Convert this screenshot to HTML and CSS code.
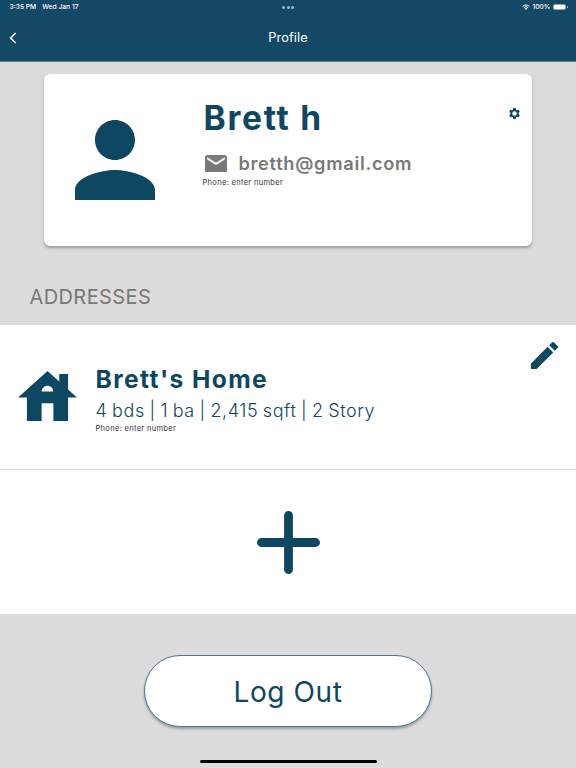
FILE: index.html
```
<!DOCTYPE html>
<html lang="en">

<head>
    <meta charset="UTF-8">
    <title>Profile</title>
    <link rel="stylesheet" href="styles.css">
</head>
<body>
    <header class="header">
        <div class="status-bar">
            <div class="status-left"><span>3:35 PM</span><span>Wed Jan 17</span></div>
            <div class="dots"><i></i><i></i><i></i></div>
            <div class="status-right">
                <svg class="wifi" viewBox="0 0 24 18"><path d="M2 7a14.500 14.500 0 0 1 20 0M5.500 11a9.500 9.500 0 0 1 13 0" fill="none" stroke="#fff" stroke-width="3"/><path d="M8 13.500a6 6 0 0 1 8 0L12 18z" fill="#fff"/></svg>
                <span class="percent">100%</span>
                <div class="battery"></div>
                <div class="battery-tip"></div>
            </div>
        </div>
        <nav class="nav">
            <svg class="back" viewBox="0 0 8 12"><path d="M6.600 1L1.600 6l5 5" fill="none" stroke="#fff" stroke-width="1.500"/></svg>
            <span class="title">Profile</span>
        </nav>
    </header>

    <section class="card">
        <svg class="avatar" viewBox="4 4 16 16"><path d="M12 12c2.210 0 4-1.790 4-4s-1.790-4-4-4-4 1.790-4 4 1.790 4 4 4zm0 2c-2.670 0-8 1.340-8 4v2h16v-2c0-2.660-5.330-4-8-4z"/></svg>
        <div class="user">
            <h1>Brett h</h1>
            <div class="email">
                <svg class="mail" viewBox="2 4 20 16"><path d="M20 4H4c-1.100 0-1.990.9-1.990 2L2 18c0 1.100.9 2 2 2h16c1.100 0 2-.9 2-2V6c0-1.100-.9-2-2-2zm0 4l-8 5-8-5V6l8 5 8-5v2z"/></svg>
                <span>bretth@gmail.com</span>
            </div>
            <p class="phone">Phone: enter number</p>
        </div>
        <svg class="gear" viewBox="0 0 24 24"><path d="M19.430 12.980c.04-.32.07-.64.07-.98s-.03-.66-.07-.98l2.110-1.650c.19-.15.24-.42.12-.64l-2-3.460c-.12-.22-.39-.3-.61-.22l-2.490 1c-.52-.4-1.080-.73-1.690-.98l-.38-2.650C14.460 2.180 14.250 2 14 2h-4c-.25 0-.46.18-.49.42l-.38 2.650c-.61.25-1.170.59-1.690.98l-2.490-1c-.23-.09-.49 0-.61.22l-2 3.460c-.13.22-.07.49.12.64l2.110 1.650c-.04.32-.07.65-.07.98s.03.66.07.98l-2.110 1.650c-.19.15-.24.42-.12.64l2 3.460c.12.22.39.3.61.22l2.490-1c.52.4 1.080.73 1.690.98l.38 2.650c.03.24.24.42.49.42h4c.25 0 .46-.18.49-.42l.38-2.650c.61-.25 1.170-.59 1.690-.98l2.490 1c.23.09.49 0 .61-.22l2-3.460c.12-.22.07-.49-.12-.64l-2.110-1.650zM12 16.200a4.200 4.200 0 1 1 0-8.400 4.200 4.200 0 0 1 0 8.400z"/></svg>
    </section>

    <h2 class="section-title">ADDRESSES</h2>

    <section class="address">
        <svg class="house" viewBox="2 3 20 17"><path d="M19 9.300V4h-3v2.600L12 3 2 12h3v8h5v-6h4v6h5v-8h3l-3-2.700zm-9 .7c0-1.100.9-2 2-2s2 .9 2 2h-4z"/></svg>
        <div class="address-info">
            <h3>Brett's Home</h3>
            <p class="details">4 bds | 1 ba | 2,415 sqft | 2 Story</p>
            <p class="phone">Phone: enter number</p>
        </div>
        <svg class="pencil" viewBox="3 3 18 18"><path d="M3 17.250V21h3.750L17.810 9.940l-3.750-3.750L3 17.250zM20.710 7.040c.39-.39.39-1.020 0-1.410l-2.340-2.340c-.39-.39-1.020-.39-1.410 0l-1.830 1.830 3.750 3.750 1.830-1.830z"/></svg>
    </section>

    <section class="add">
        <svg class="plus" viewBox="0 0 63 63"><path d="M31.500 4.400v54.200M4.400 31.500h54.200" stroke="#0d4761" stroke-width="8.800" stroke-linecap="round"/></svg>
    </section>

    <button class="logout">Log Out</button>
    <div class="home-bar"></div>
</body>
</html>
```
FILE: styles.css
```
* {
    box-sizing: border-box;
}
body {
    font-family: Inter, sans-serif;
    background-color: #dcdcdc;
    color: #0d4761;
    margin: 0;
    height: 768px;
    overflow: hidden;
    display: flex;
    flex-direction: column;
}
h1, h2, h3, p {
    margin: 0;
}
svg {
    display: block;
    fill: #0d4761;
    flex-shrink: 0;
}
.header {
    height: 62px;
    background-color: #144966;
    border-bottom: 1px solid #5c8196;
    color: #fff;
}
.status-bar {
    height: 14px;
    display: grid;
    grid-template-columns: 1fr auto 1fr;
    align-items: center;
    padding: 0 9px 0 9.500px;
    font-size: 6.700px;
    font-weight: 500;
}
.status-left {
    display: flex;
    gap: 6px;
}
.dots {
    display: flex;
    gap: 1.500px;
}
.dots i {
    width: 3px;
    height: 3px;
    border-radius: 50%;
    background-color: #8fbcdc;
}
.status-right {
    display: flex;
    justify-content: flex-end;
    align-items: center;
}
.wifi {
    width: 8px;
    height: 6px;
    margin-right: 2px;
}
.percent {
    margin-right: 2px;
}
.battery {
    width: 13.500px;
    height: 6px;
    border-radius: 2px;
    background-color: #fff;
    border: 0.500px solid #8da8b7;
}
.battery-tip {
    width: 1px;
    height: 2px;
    margin: 0 -0.500px 0 0.500px;
    background-color: #8da8b7;
}
.nav {
    height: 47px;
    display: grid;
    grid-template-columns: 1fr auto 1fr;
    align-items: center;
    padding: 0 8.500px;
}
.back {
    width: 8px;
    height: 12px;
}
.title {
    font-size: 12.800px;
    letter-spacing: 0.100px;
}
.card {
    width: 488px;
    height: 172px;
    margin: 12px 0 0 44px;
    padding: 0 11px 0 31px;
    display: flex;
    background-color: #fff;
    border-radius: 6px;
    box-shadow: 0 2px 3px rgba(0,0,0,.3);
}
.avatar {
    width: 80px;
    height: 80px;
    margin-top: 46px;
}
.user {
    flex: 1;
    margin-left: 48px;
    padding-top: 24px;
}
h1 {
    margin-left: 0.500px;
    font-size: 33.500px;
    line-height: 40px;
    letter-spacing: 1.750px;
}
.email {
    display: flex;
    align-items: center;
    gap: 12px;
    height: 24px;
    margin-top: 13px;
    color: #787878;
    font-size: 18.200px;
    font-weight: 600;
    letter-spacing: 0.720px;
}
.mail {
    width: 22px;
    height: 17.600px;
    margin-left: 1.500px;
    margin-top: 1px;
    fill: #787878;
}
.phone {
    font-size: 7.500px;
    line-height: 10px;
    letter-spacing: 0.320px;
    color: #333;
}
.user .phone {
    margin-top: 3px;
    margin-left: -0.500px;
}
.gear {
    width: 13px;
    height: 13px;
    margin-top: 33px;
}
.section-title {
    height: 79px;
    padding: 38px 0 0 29.500px;
    font-size: 20px;
    line-height: 26px;
    font-weight: 400;
    letter-spacing: 0.400px;
    color: #787878;
}
.address {
    height: 144px;
    display: flex;
    padding: 0 18px 0 18px;
    background-color: #fff;
}
.house {
    width: 59px;
    height: 50px;
    margin-top: 46px;
}
.address-info {
    flex: 1;
    margin-left: 18.500px;
    padding-top: 39px;
}
h3 {
    font-size: 24.600px;
    line-height: 30px;
    letter-spacing: 1.400px;
}
.details {
    font-size: 18px;
    line-height: 24px;
    font-weight: 300;
    margin-top: 5px;
    letter-spacing: 0.560px;
    word-spacing: -0.900px;
}
.address .phone {
    margin-top: 1px;
}
.pencil {
    width: 27px;
    height: 27px;
    margin-top: 16.500px;
}
.add {
    height: 145px;
    display: flex;
    justify-content: center;
    align-items: center;
    padding-top: 1px;
    background-color: #fff;
    border-top: 1px solid #dcdcdc;
}
.plus {
    width: 63px;
    height: 63px;
}
.logout {
    width: 288px;
    height: 72px;
    margin: 41px auto 0;
    padding: 1px 0 0;
    background-color: #fff;
    border: 1px solid #4a788c;
    border-radius: 36px;
    box-shadow: 0 2px 3px rgba(0,0,0,.3);
    color: #0d4761;
    font-family: Inter, sans-serif;
    font-size: 28px;
    letter-spacing: 0.600px;
}
.home-bar {
    width: 177px;
    height: 3px;
    margin: 33px auto 0;
    border-radius: 2px;
    background-color: #000;
}
```
